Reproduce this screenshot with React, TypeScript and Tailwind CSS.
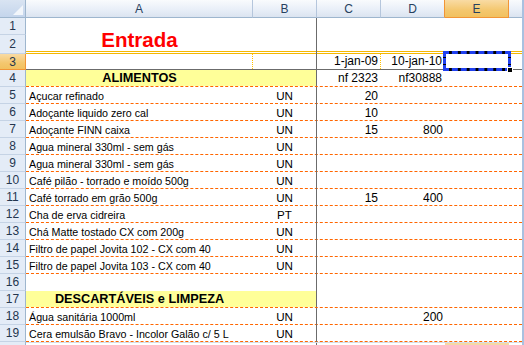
import clsx from "clsx";

interface Item {
  n: number;
  a?: string;
  b?: string;
  c?: string;
  d?: string;
  bold?: boolean;
  noLine?: boolean;
}

const items: Item[] = [
  { n: 5, a: "Açucar refinado", b: "UN", c: "20" },
  { n: 6, a: "Adoçante liquido zero cal", b: "UN", c: "10" },
  { n: 7, a: "Adoçante FINN caixa", b: "UN", c: "15", d: "800" },
  { n: 8, a: "Agua mineral 330ml - sem gás", b: "UN" },
  { n: 9, a: "Agua mineral 330ml - sem gás", b: "UN" },
  { n: 10, a: "Café pilão - torrado e moído 500g", b: "UN" },
  { n: 11, a: "Café torrado em grão 500g", b: "UN", c: "15", d: "400" },
  { n: 12, a: "Cha de erva cidreira", b: "PT" },
  { n: 13, a: "Chá Matte tostado CX com 200g", b: "UN" },
  { n: 14, a: "Filtro de papel Jovita 102 - CX com 40", b: "UN" },
  { n: 15, a: "Filtro de papel Jovita 103 - CX com 40", b: "UN" },
  { n: 16, noLine: true },
  { n: 17, a: "DESCARTÁVEIS e LIMPEZA", bold: true },
  { n: 18, a: "Água sanitária 1000ml", b: "UN", d: "200" },
  { n: 19, a: "Cera emulsão Bravo - Incolor Galão c/ 5 L", b: "UN" },
];

const headBg = "bg-[linear-gradient(#f9fbfd,#e9eff8_55%,#dbe4f0)]";
const activeBg = "bg-[linear-gradient(#f9dba4,#f4c76e_60%,#f1c15f)]";

const RowHead = ({ n, active }: { n: number; active?: boolean }) => (
  <div
    className={clsx(
      "w-[26px] shrink-0 flex items-center justify-center border-r border-b text-[12px] text-[#24364f]",
      active
        ? clsx(activeBg, "border-r-[#f29536] border-b-[#f29536]")
        : "bg-[#e4ecf7] border-r-[#9eb6ce] border-b-[#c5d3e5]"
    )}
  >
    {n}
  </div>
);

const ColHead = ({ label, active, orangeEdge, w }: { label: string; active?: boolean; orangeEdge?: boolean; w: string }) => (
  <div
    className={clsx(
      w,
      "shrink-0 flex items-center justify-center border-r border-b text-[12px] text-[#27415f]",
      active ? clsx(activeBg, "border-b-[#f29536]") : clsx(headBg, "border-b-[#9eb6ce]"),
      active || orangeEdge ? "border-r-[#f29536]" : "border-r-[#b5c6dc]"
    )}
  >
    {label}
  </div>
);

const App = () => {
  return (
    <div className="w-[524px] h-[345px] flex bg-white overflow-hidden font-['Liberation_Sans',Arial,sans-serif] text-black">
      <div className="w-[522px] flex flex-col">
        {/* Column headers */}
        <div className="flex h-[18px]">
          <div className="w-[26px] shrink-0 flex items-end justify-end border-r border-b border-r-[#9eb6ce] border-b-[#9eb6ce] bg-[linear-gradient(#d9e4f2,#c4d5ec)] pr-[2px] pb-[2px]">
            <svg width="10" height="10" viewBox="0 0 10 10">
              <polygon points="10,0 10,10 0,10" fill="#f2f6fb" />
            </svg>
          </div>
          <ColHead label="A" w="w-[227px]" />
          <ColHead label="B" w="w-[64px]" />
          <ColHead label="C" w="w-[64px]" />
          <ColHead label="D" w="w-[64px]" orangeEdge />
          <ColHead label="E" w="w-[64px]" active />
          <div className={clsx("flex-1 border-b border-b-[#9eb6ce]", headBg)} />
        </div>

        {/* Row 1 */}
        <div className="flex h-[17px]">
          <RowHead n={1} />
          <div className="flex flex-1 border-b border-b-white">
            <div className="w-[227px] shrink-0" />
            <div className="w-[64px] shrink-0 border-r border-[#6b6b6b] -mb-px" />
          </div>
        </div>

        {/* Row 2 */}
        <div className="flex h-[19px]">
          <RowHead n={2} />
          <div className="flex flex-1 border-b-[3px] border-double border-[#f5b800]">
            <div className="w-[227px] shrink-0 flex items-end justify-center pb-px text-[20.5px] leading-[20px] font-bold text-[#ff0000] whitespace-nowrap">
              Entrada
            </div>
            <div className="w-[64px] shrink-0 border-r border-[#6b6b6b] -mb-[3px]" />
          </div>
        </div>

        {/* Row 3 */}
        <div className="flex h-[16px]">
          <RowHead n={3} active />
          <div className="flex flex-1 border-b border-[#6b6b6b] text-[12px] leading-[14px] whitespace-nowrap">
            <div className="w-[227px] shrink-0 border-r border-dotted border-[#ffc000]" />
            <div className="w-[64px] shrink-0 border-r border-[#6b6b6b]" />
            <div className="w-[64px] shrink-0 flex items-end justify-end pr-[2px] pb-px border-r border-dotted border-[#ffc000]">
              1-jan-09
            </div>
            <div className="w-[64px] shrink-0 flex items-end justify-end pr-[3px] pb-px">10-jan-10</div>
            <div className="w-[64px] shrink-0 relative">
              <div className="absolute left-[-2px] right-[-2px] top-[-3px] bottom-[-2px] border-[3px] border-black">
                <div className="absolute -inset-[3px] border-[3px] border-dashed border-[#1f3ff0]" />
                <div className="absolute right-[-5px] bottom-[-5px] w-[6px] h-[6px] bg-black border border-white" />
              </div>
            </div>
          </div>
        </div>

        {/* Row 4 */}
        <div className="flex h-[17px]">
          <RowHead n={4} />
          <div className="flex flex-1 border-b border-dashed border-[#ff6600] text-[12px] leading-[14px] whitespace-nowrap">
            <div className="w-[227px] shrink-0 flex items-end justify-center pb-px bg-[#ffff99] text-[12.7px] font-bold">
              ALIMENTOS
            </div>
            <div className="w-[64px] shrink-0 bg-[#ffff99] border-r border-[#6b6b6b]" />
            <div className="w-[64px] shrink-0 flex items-end justify-end pr-[3px] pb-px">nf 2323</div>
            <div className="w-[64px] shrink-0 flex items-end justify-end pr-[3px] pb-px">nf30888</div>
          </div>
        </div>

        {/* Rows 5-19 */}
        {items.map((it) => (
          <div key={it.n} className="flex h-[17px]">
            <RowHead n={it.n} />
            <div
              className={clsx(
                "flex flex-1 border-b text-[12px] leading-[14px] whitespace-nowrap",
                it.noLine ? "border-b-white" : "border-dashed border-[#ff6600]"
              )}
            >
              {it.bold ? (
                <div className="w-[227px] shrink-0 flex items-end justify-center pb-px bg-[#ffff99] text-[12.7px] font-bold">
                  {it.a}
                </div>
              ) : (
                <div className="w-[227px] shrink-0 flex items-end pl-[3px] text-[10.7px]">{it.a}</div>
              )}
              <div
                className={clsx(
                  "w-[64px] shrink-0 flex items-end justify-center border-r border-[#6b6b6b] text-[11.6px]",
                  it.bold ? "bg-[#ffff99]" : "-mb-px pb-px"
                )}
              >
                {it.b}
              </div>
              <div className="w-[64px] shrink-0 flex items-end justify-end pr-[3px]">{it.c}</div>
              <div className="w-[64px] shrink-0 flex items-end justify-end pr-[2px]">{it.d}</div>
            </div>
          </div>
        ))}

        {/* partial next row */}
        <div className="flex flex-1">
          <div className="w-[26px] shrink-0 bg-[#e4ecf7] border-r border-[#9eb6ce]" />
          <div className="flex flex-1 border-t border-[#d6dee9]">
            <div className="w-[227px] shrink-0" />
            <div className="w-[64px] shrink-0 border-r border-[#6b6b6b]" />
            <div className="w-[128px] shrink-0" />
            <div className="w-[64px] shrink-0 bg-[#f5d9a6]" />
          </div>
        </div>
      </div>
      <div className="w-[2px] bg-[#a9c1e0]" />
    </div>
  );
};

export default App;
